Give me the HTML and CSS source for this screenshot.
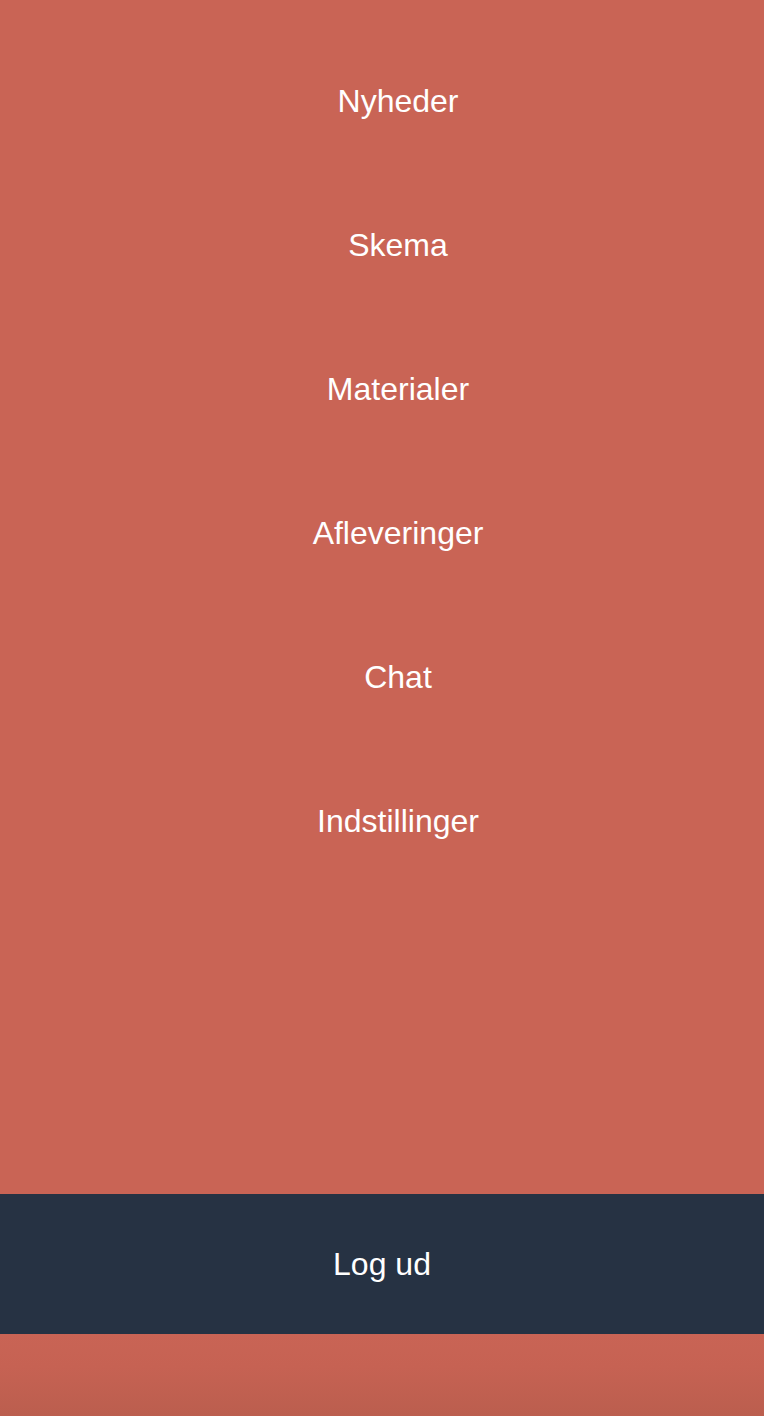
FILE: index.html
```html
<!DOCTYPE html>
<html lang="da">
<head>
<meta charset="utf-8">
<title>Menu</title>
<link rel="stylesheet" href="styles.css">
</head>
<body>
<div class="page">
  <nav class="menu">
    <a class="menu-item" href="#">Nyheder</a>
    <a class="menu-item" href="#">Skema</a>
    <a class="menu-item" href="#">Materialer</a>
    <a class="menu-item" href="#">Afleveringer</a>
    <a class="menu-item" href="#">Chat</a>
    <a class="menu-item" href="#">Indstillinger</a>
  </nav>
  <a class="logout" href="#">Log ud</a>
  <div class="footer"></div>
</div>
</body>
</html>
```
FILE: styles.css
```css
html, body {
  margin: 0;
  padding: 0;
}
body {
  background: #c96455;
  font-family: "Liberation Sans", Arial, Helvetica, sans-serif;
  color: #ffffff;
}
.page {
  display: flex;
  flex-direction: column;
  height: 1416px;
}
.menu {
  display: flex;
  flex-direction: column;
  padding: 29px 0 0 32px;
  flex: 1;
}
.menu-item {
  display: flex;
  align-items: center;
  justify-content: center;
  height: 144px;
  color: #ffffff;
  text-decoration: none;
  font-size: 32px;
}
.logout {
  display: flex;
  align-items: center;
  justify-content: center;
  height: 140px;
  background: #263243;
  color: #ffffff;
  text-decoration: none;
  font-size: 32px;
}
.footer {
  height: 82px;
  background: linear-gradient(to bottom, #c96455 0%, #c66253 40%, #bb5e4e 100%);
}
```
